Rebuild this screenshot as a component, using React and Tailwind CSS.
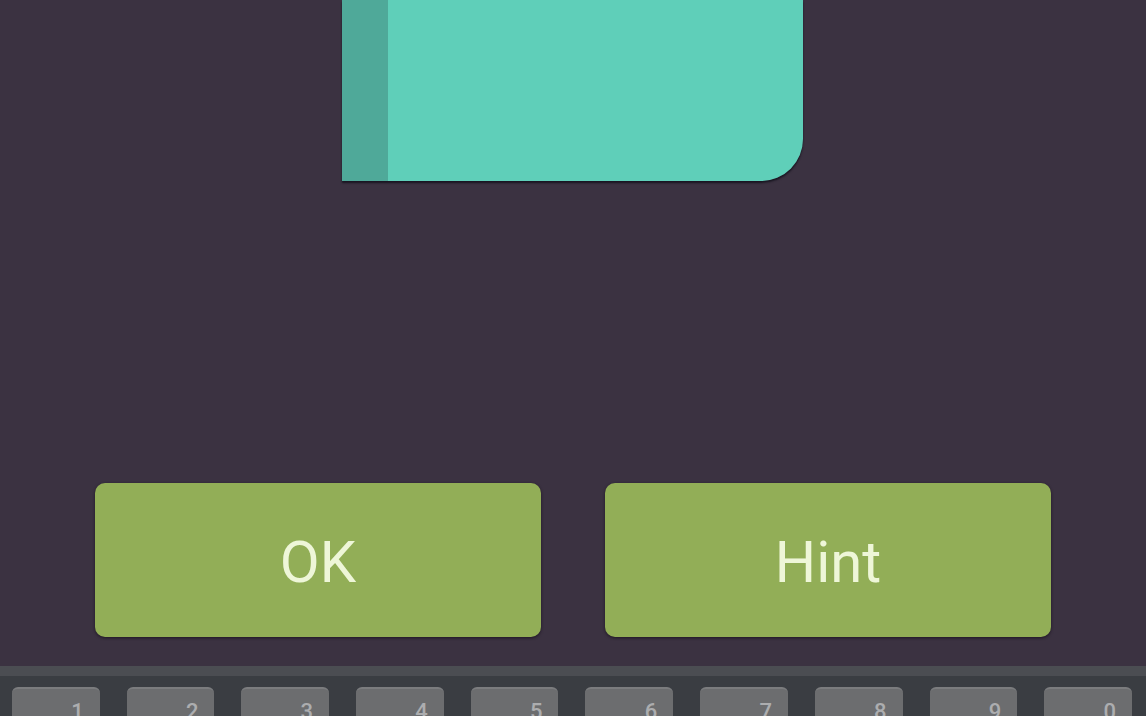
import React from "react";

const keys = ["1", "2", "3", "4", "5", "6", "7", "8", "9", "0"];

export default function App() {
  return (
    <div
      className="h-[716px] w-full overflow-hidden bg-[#3b3241] flex flex-col"
      style={{ fontFamily: "Roboto, 'Noto Sans', sans-serif" }}
    >
      <div className="ml-[342px] w-[461px] h-[181px] shrink-0 flex rounded-br-[42px] overflow-hidden shadow-[0_2px_2px_rgba(10,10,20,0.7)]">
        <div className="w-[46px] bg-[#4fa999]" />
        <div className="flex-1 bg-[#5fcfb9]" />
      </div>

      <div className="mt-[302px] h-[154px] shrink-0 flex gap-[64px] px-[95px]">
        <button className="flex-1 rounded-[10px] bg-[#92ae57] text-[#eef6d8] text-[58px] leading-none shadow-[0_1px_3px_rgba(20,10,25,0.7)] flex items-center justify-center pt-[4px]">
          OK
        </button>
        <button className="flex-1 rounded-[10px] bg-[#92ae57] text-[#eef6d8] text-[58px] leading-none shadow-[0_1px_3px_rgba(20,10,25,0.7)] flex items-center justify-center pt-[4px]">
          Hint
        </button>
      </div>

      <div className="mt-[29px] flex-1 border-t-[10px] border-[#4b4d52] bg-[#3a3d42] pt-[11px] pl-[12px] pr-[14px]">
        <div className="grid grid-cols-10 gap-[27px]">
          {keys.map((k) => (
            <div
              key={k}
              className="h-[50px] rounded-[6px] bg-[#6c6d6f] border-t-[2px] border-[#7b7c7e] flex justify-end pr-[16px] pt-[12px]"
            >
              <span className="text-[22px] leading-none text-[#acadaf] font-medium">
                {k}
              </span>
            </div>
          ))}
        </div>
      </div>
    </div>
  );
}
